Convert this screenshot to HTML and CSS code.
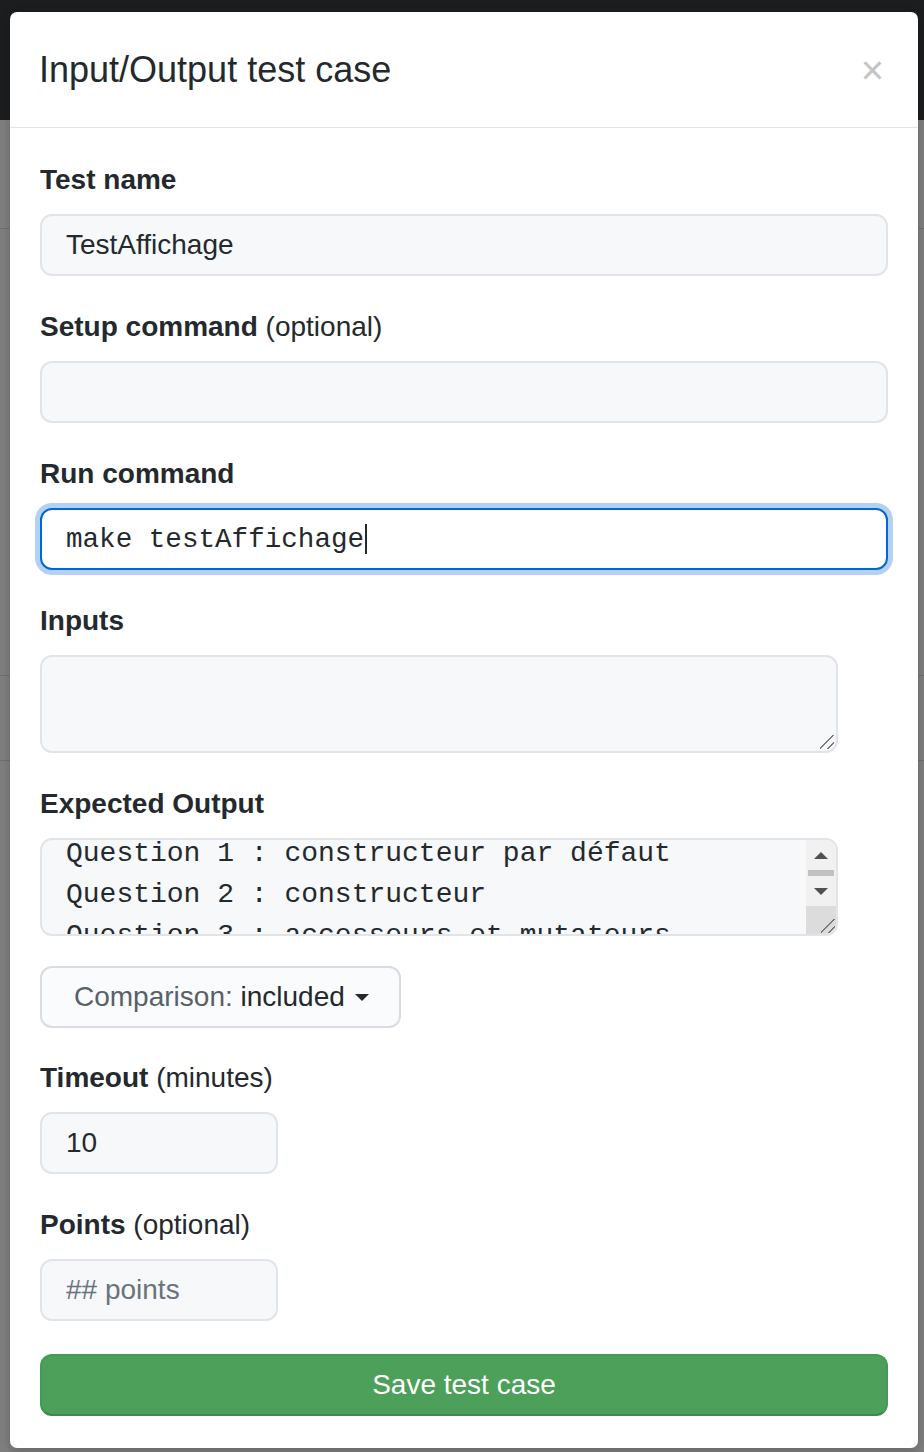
FILE: index.html
```html
<!DOCTYPE html>
<html lang="en">
<head>
<meta charset="utf-8">
<title>Input/Output test case</title>
<link rel="stylesheet" href="styles.css">
</head>
<body>
  <div class="modal" role="dialog" aria-labelledby="modal-title">
    <div class="modal-header">
      <h1 class="modal-title" id="modal-title">Input/Output test case</h1>
      <button class="close" type="button" aria-label="Close">×</button>
    </div>
    <form class="modal-body">
      <div class="form-group">
        <label class="label">Test name</label>
        <input class="input" type="text" value="TestAffichage">
      </div>
      <div class="form-group">
        <label class="label">Setup command <span class="note">(optional)</span></label>
        <input class="input" type="text" value="">
      </div>
      <div class="form-group">
        <label class="label">Run command</label>
        <div class="input input-code is-focused">make testAffichage<span class="text-caret"></span></div>
      </div>
      <div class="form-group">
        <label class="label">Inputs</label>
        <div class="textarea">
          <div class="textarea-content"></div>
          <span class="grip"></span>
        </div>
      </div>
      <div class="form-group form-group-tight">
        <label class="label">Expected Output</label>
        <div class="textarea">
          <div class="textarea-content code"><div class="scrolled">Question 1 : constructeur par défaut
Question 2 : constructeur
Question 3 : accesseurs et mutateurs</div></div>
          <div class="scrollbar">
            <div class="sb-btn"><span class="arrow-up"></span></div>
            <div class="sb-thumb"></div>
            <div class="sb-btn"><span class="arrow-down"></span></div>
            <div class="sb-corner"><span class="grip grip-dark"></span></div>
          </div>
        </div>
      </div>
      <div class="form-group form-group-tight">
        <button class="btn-select" type="button"><span class="muted">Comparison:</span>&nbsp;included<span class="dropdown-caret"></span></button>
      </div>
      <div class="form-group">
        <label class="label">Timeout <span class="note">(minutes)</span></label>
        <input class="input input-narrow" type="text" value="10">
      </div>
      <div class="form-group form-group-loose">
        <label class="label">Points <span class="note">(optional)</span></label>
        <input class="input input-narrow" type="text" placeholder="## points">
      </div>
      <button class="btn-primary" type="button">Save test case</button>
    </form>
  </div>
</body>
</html>
```
FILE: styles.css
```css
html, body {
  margin: 0;
  padding: 0;
}

body {
  min-height: 1452px;
  font-family: "Liberation Sans", Arial, sans-serif;
  color: #24292e;
  background:
    linear-gradient(#1b1d1e, #1b1d1e) 0 0 / 100% 120px no-repeat,
    linear-gradient(#6f6f6f, #6f6f6f) 0 228px / 100% 1px no-repeat,
    linear-gradient(#6f6f6f, #6f6f6f) 0 675px / 100% 1px no-repeat,
    linear-gradient(#6f6f6f, #6f6f6f) 0 760px / 100% 1px no-repeat,
    #7f7f7f;
  overflow: hidden;
}

.modal {
  width: 908px;
  margin: 12px 6px 0 10px;
  background: #fff;
  border-radius: 7px;
  box-shadow: 0 4px 12px rgba(0, 0, 0, 0.2);
}

.modal-header {
  height: 115px;
  display: flex;
  align-items: center;
  justify-content: space-between;
  padding: 0 34px 0 29px;
  border-bottom: 1px solid #e1e4e8;
}

.modal-title {
  margin: 0;
  font-size: 36px;
  font-weight: 400;
  line-height: 44px;
  color: #24292e;
}

.close {
  padding: 0;
  border: 0;
  background: none;
  font-family: "Liberation Sans", Arial, sans-serif;
  font-size: 40px;
  line-height: 44px;
  color: #c4c4c4;
}

.modal-body {
  display: block;
  margin: 0;
  padding: 32px 30px 32px;
}

.form-group {
  margin-bottom: 31px;
}

.form-group-tight {
  margin-bottom: 30px;
}

.form-group-loose {
  margin-bottom: 33px;
}

.label {
  display: block;
  font-size: 28px;
  font-weight: 700;
  line-height: 40px;
  margin-bottom: 14px;
}

.note {
  font-weight: 400;
}

.input {
  display: block;
  box-sizing: border-box;
  width: 100%;
  height: 62px;
  padding: 0 24px;
  font-family: "Liberation Sans", Arial, sans-serif;
  font-size: 28px;
  color: #24292e;
  background: #f6f8fa;
  border: 2px solid #e1e4e8;
  border-radius: 12px;
  outline: none;
}

.input::placeholder {
  color: #6a737d;
}

.input-narrow {
  width: 238px;
}

.input-code {
  display: flex;
  align-items: center;
  font-family: "Liberation Mono", "Courier New", monospace;
  font-size: 27.6px;
  white-space: pre;
}

.is-focused {
  background: #fff;
  border-color: #0366d6;
  box-shadow: 0 0 0 5px rgba(3, 102, 214, 0.3);
}

.text-caret {
  display: inline-block;
  width: 2px;
  height: 30px;
  margin-left: 1px;
  background: #24292e;
}

.textarea {
  position: relative;
  display: flex;
  box-sizing: border-box;
  width: 798px;
  height: 98px;
  background: #f6f8fa;
  border: 2px solid #e1e4e8;
  border-radius: 12px;
  overflow: hidden;
}

.textarea-content {
  flex: 1;
  overflow: hidden;
  padding-left: 24px;
}

.code {
  font-family: "Liberation Mono", "Courier New", monospace;
  font-size: 28px;
  line-height: 41px;
  white-space: pre;
  color: #24292e;
}

.scrolled {
  margin-top: -7px;
}

.scrollbar {
  width: 30px;
  display: flex;
  flex-direction: column;
  background: #f1f1f1;
}

.sb-btn {
  height: 30px;
  display: flex;
  align-items: center;
  justify-content: center;
}

.arrow-up {
  width: 0;
  height: 0;
  border-left: 7px solid transparent;
  border-right: 7px solid transparent;
  border-bottom: 7px solid #505050;
}

.arrow-down {
  width: 0;
  height: 0;
  border-left: 7px solid transparent;
  border-right: 7px solid transparent;
  border-top: 7px solid #505050;
}

.sb-thumb {
  height: 6px;
  margin: 0 2px;
  background: #c1c1c1;
}

.sb-corner {
  position: relative;
  flex: 1;
  background: #dcdcdc;
}

.grip {
  position: absolute;
  right: 2px;
  bottom: 2px;
  width: 14px;
  height: 14px;
  background: linear-gradient(135deg,
    transparent 0 46%,
    #7a7a7a 46% 53%,
    transparent 53% 72%,
    #7a7a7a 72% 79%,
    transparent 79%);
}

.grip-dark {
  right: 1px;
  bottom: 1px;
}

.btn-select {
  display: flex;
  align-items: center;
  box-sizing: border-box;
  width: 361px;
  height: 62px;
  padding: 0 0 0 32px;
  font-family: "Liberation Sans", Arial, sans-serif;
  font-size: 28px;
  color: #24292e;
  background: #fafbfc;
  border: 2px solid #d9dce0;
  border-radius: 12px;
}

.muted {
  color: #586069;
}

.dropdown-caret {
  display: inline-block;
  width: 0;
  height: 0;
  margin-left: 10px;
  border-left: 7px solid transparent;
  border-right: 7px solid transparent;
  border-top: 7px solid #24292e;
}

.btn-primary {
  display: block;
  box-sizing: border-box;
  width: 100%;
  height: 62px;
  padding: 0;
  font-family: "Liberation Sans", Arial, sans-serif;
  font-size: 28px;
  color: #fff;
  background: #4ca05a;
  border: 2px solid #479a55;
  border-bottom-color: #3d8a4a;
  border-radius: 12px;
}
```
